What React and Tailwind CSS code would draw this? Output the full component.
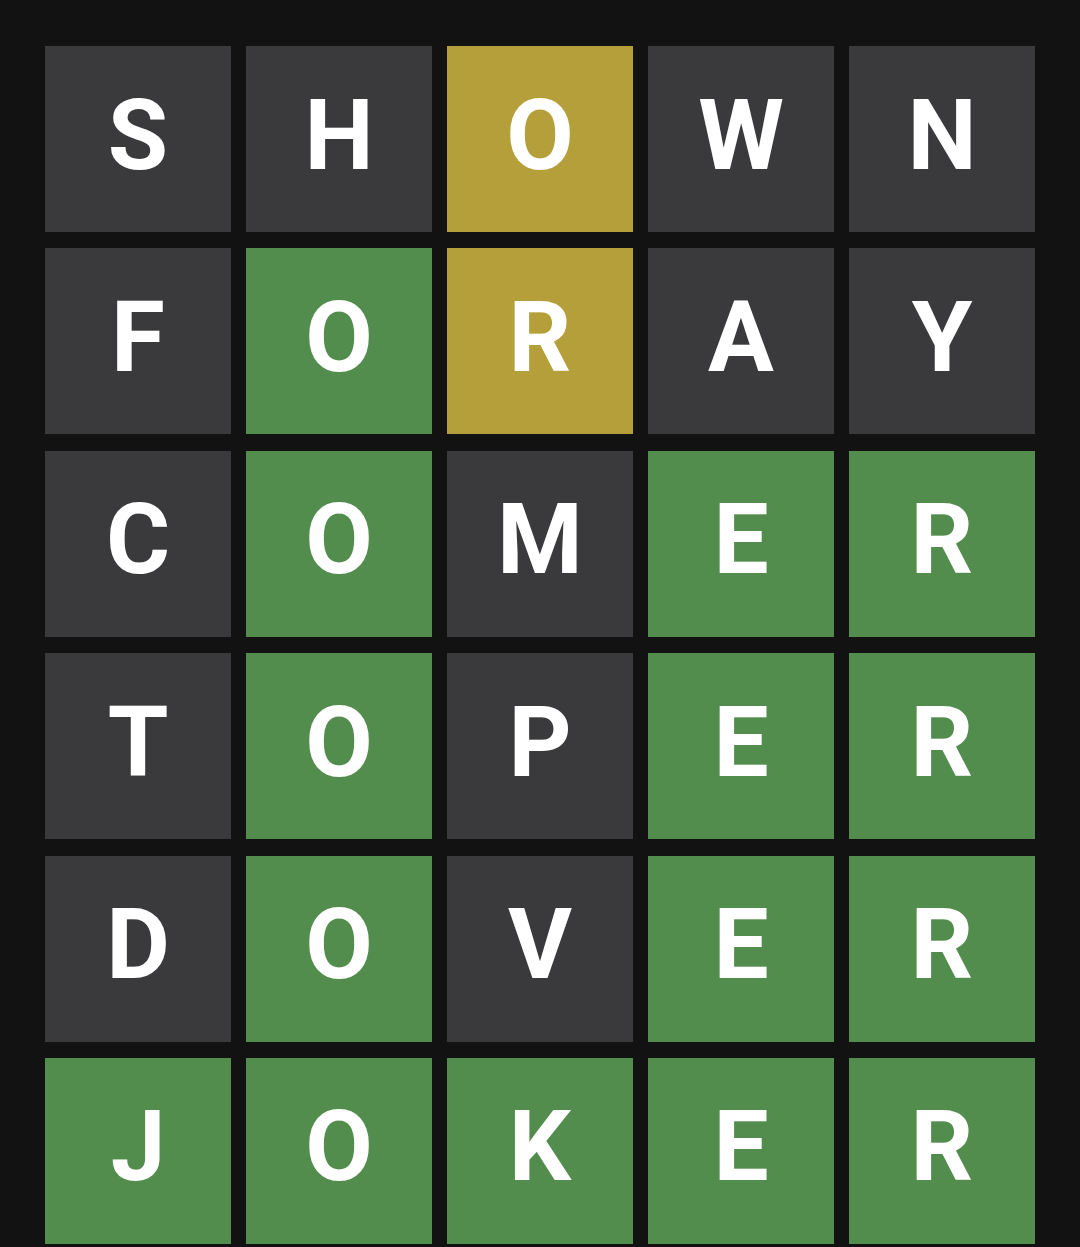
const rows = [
  ["SHOWN", "xxyxx"],
  ["FORAY", "xgyxx"],
  ["COMER", "xgxgg"],
  ["TOPER", "xgxgg"],
  ["DOVER", "xgxgg"],
  ["JOKER", "ggggg"],
];

const colors = {
  x: "bg-[#3a3a3c]",
  y: "bg-[#b59f3b]",
  g: "bg-[#538d4e]",
};

export default function App() {
  return (
    <div className="min-h-screen bg-[#121213] px-[45px] pt-[46px]">
      <div className="grid grid-cols-5 gap-x-[15px] gap-y-[16.4px]">
        {rows.map(([word, states], r) =>
          word.split("").map((ch, i) => (
            <div
              key={`${r}-${i}`}
              className={`${colors[states[i]]} h-[186px] flex items-center justify-center pb-[7px] text-white font-bold text-[98px] leading-none`}
              style={{ fontFamily: 'Roboto, sans-serif' }}
            >
              {ch}
            </div>
          ))
        )}
      </div>
    </div>
  );
}
